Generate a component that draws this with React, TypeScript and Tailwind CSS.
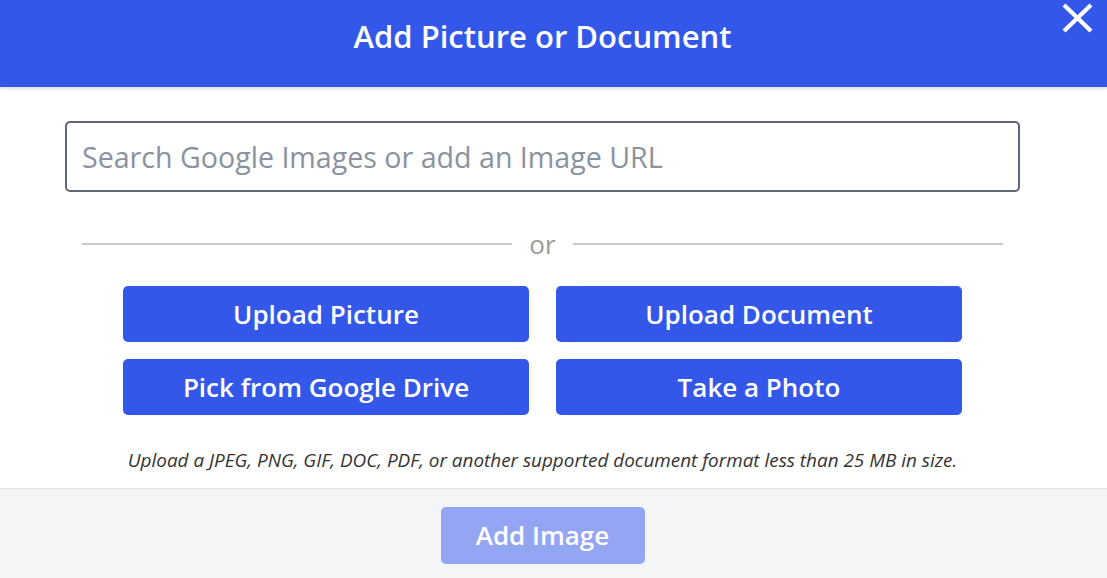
const actions = ["Upload Picture", "Upload Document", "Pick from Google Drive", "Take a Photo"];

export default function App() {
  return (
    <div
      className="relative h-[578px] w-[1107px] overflow-hidden bg-white"
      style={{ fontFamily: '"Open Sans", "Noto Sans", sans-serif' }}
    >
      {/* Header */}
      <div className="flex h-[87px] w-full items-center justify-center bg-[#3358e9] pb-[15px] pr-[22px] shadow-[0_2px_2px_rgba(0,0,0,0.12)]">
        <h1 className="text-[31px] font-semibold text-white">Add Picture or Document</h1>
      </div>

      {/* Body */}
      <div className="flex w-[1085px] flex-col px-[65px] pt-[34px]">
        <input
          type="text"
          placeholder="Search Google Images or add an Image URL"
          className="h-[71px] w-full rounded-[5px] border-2 border-[#5f6678] px-[15px] text-[28.6px] text-[#333] outline-none placeholder:text-[#8a92a1]"
        />

        <div className="mt-[35px] flex items-center gap-[17px] px-[17px]">
          <div className="h-[2px] flex-1 bg-[#c9c9c9]" />
          <span className="text-[26px] leading-[34px] text-[#9a9a9a]">or</span>
          <div className="h-[2px] flex-1 bg-[#c9c9c9]" />
        </div>

        <div className="mt-[25px] grid grid-cols-2 gap-x-[27px] gap-y-[17px] px-[58px]">
          {actions.map((label) => (
            <button
              key={label}
              className="h-[56px] rounded-[5px] bg-[#3358e9] text-[26px] font-semibold text-white"
            >
              {label}
            </button>
          ))}
        </div>

        <p className="mt-[32px] text-center text-[18.9px] italic leading-[26px] text-[#333]">
          Upload a JPEG, PNG, GIF, DOC, PDF, or another supported document format less than 25 MB in size.
        </p>
      </div>

      {/* Footer */}
      <div className="mt-[15px] flex h-[92px] w-full border-t border-[#e2e4e8] bg-[#f4f5f7] pt-[18px]">
        <div className="flex w-[1085px] justify-center">
          <button className="h-[57px] w-[204px] rounded-[5px] bg-[#94a6f3] text-[26px] font-semibold text-white">
            Add Image
          </button>
        </div>
      </div>

      <button className="absolute left-[1060px] top-[2px] text-white">
        <svg width="35" height="32" viewBox="0 0 35 32" fill="none" stroke="currentColor" strokeWidth="4.2">
          <path d="M4 3 L31 29 M31 3 L4 29" />
        </svg>
      </button>
    </div>
  );
}
